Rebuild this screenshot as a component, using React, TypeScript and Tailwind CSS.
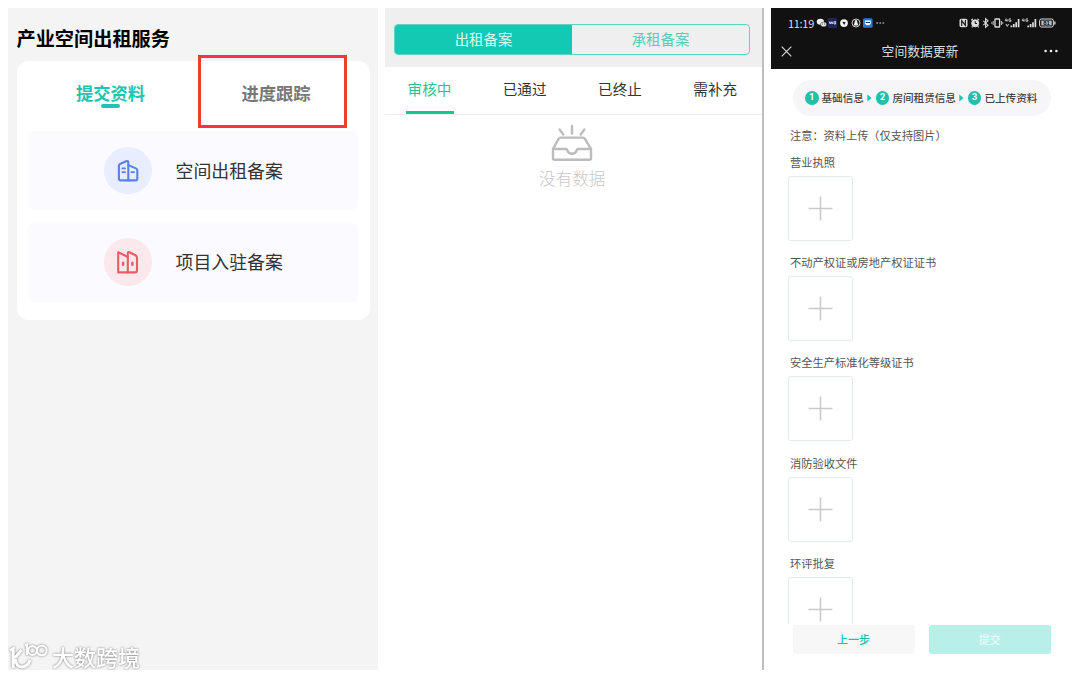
import type { ReactNode } from 'react';

const RECORD_TABS = ['审核中', '已通过', '已终止', '需补充'];

const STEPS = ['基础信息', '房间租赁信息', '已上传资料'];

const UPLOADS = [
  '营业执照',
  '不动产权证或房地产权证证书',
  '安全生产标准化等级证书',
  '消防验收文件',
  '环评批复',
];

function BlueBuilding() {
  return (
    <svg width="22" height="22" viewBox="0 0 22 22" fill="none" stroke="#5b7fee" strokeWidth="2.1" strokeLinejoin="round" strokeLinecap="round">
      <path d="M11.3 20.4H3.8Q1.9 20.4 1.9 18.5V5.8Q1.9 4.6 3 4L9.1 1.3Q11.3 .6 11.3 2.5Z" />
      <path d="M11.3 5.1L18.9 8.4Q20.3 9 20.3 10.5V18.5Q20.3 20.4 18.5 20.4H11.3" />
      <path d="M5.4 8.4H8M5.4 12.2H8M14.4 12.2H17" strokeWidth="1.8" />
    </svg>
  );
}

function RedBuilding() {
  return (
    <svg width="22" height="24" viewBox="0 0 22 24" fill="none" stroke="#ec5b68" strokeWidth="2.1" strokeLinejoin="round" strokeLinecap="round">
      <path d="M10.8 22.4H1.2V2.2L10.8 7" />
      <path d="M10.8 22.4V3.2Q10.8 1.6 12.4 2.2L18.4 5.3Q20 6.1 20 7.8V20.6Q20 22.4 18.2 22.4Z" />
      <path d="M6.1 12.7V14.8M15.4 12.7V14.8" strokeWidth="2.5" />
    </svg>
  );
}

function EmptyInbox() {
  return (
    <svg width="42" height="38" viewBox="0 0 42 38" fill="none" stroke="#bcbcbc" strokeWidth="2.4" strokeLinejoin="round" strokeLinecap="round">
      <path d="M21 2V9.5M8.6 5.5L12.3 10.6M33.3 5.5L29.6 10.6" />
      <path d="M2 25L7.6 14.8Q8.4 13.6 9.8 13.6H31.8Q33.2 13.6 34 14.8L40 25V34Q40 35.8 38.2 35.8H3.8Q2 35.8 2 34Z" />
      <path d="M2 25H14.8Q16 25 16.3 26.5Q17.6 29.8 21 29.8Q24.4 29.8 25.7 26.5Q26 25 27.2 25H40" />
    </svg>
  );
}

// Left half of the status bar: chat, app and notification glyphs
function NotificationIcons() {
  return (
    <svg width="70" height="12" viewBox="0 0 70 12">
      <ellipse cx="4.4" cy="4.7" rx="3.7" ry="3" fill="#eee" />
      <ellipse cx="7.6" cy="7.4" rx="3" ry="2.4" fill="#eee" stroke="#111" strokeWidth=".5" />
      <circle cx="6.6" cy="7" r=".5" fill="#111" />
      <circle cx="8.6" cy="7" r=".5" fill="#111" />
      <rect x="11.8" y="1" width="9.4" height="10" rx="1" fill="#20245c" />
      <path d="M13.2 4.5L14.2 7L15.2 4.7L16.2 7L17 4.6M18 4.7H19.6V7H18Z" stroke="#ddd" strokeWidth=".9" fill="none" />
      <circle cx="28" cy="6.1" r="3.9" fill="#f2f2f2" />
      <path d="M26.4 4.8L29.6 5.2L28.1 8Z" fill="#111" />
      <circle cx="40" cy="6" r="4" fill="none" stroke="#ddd" strokeWidth=".9" />
      <path d="M40 2.7Q41.6 3 41.4 5.6L42.4 8.5H37.6L38.6 5.6Q38.4 3 40 2.7Z" fill="#eee" />
      <rect x="47" y="1.2" width="9.6" height="9.6" rx="1.6" fill="#2879d4" />
      <path d="M48.9 3.4H54.7V6.8Q51.8 9.8 48.9 6.8Z" fill="#fff" />
      <path d="M49.6 5H54V6H49.6Z" fill="#17365c" />
      <path d="M60.3 6H62M63.4 6H65.1M66.5 6H68.2" stroke="#ddd" strokeWidth="1.2" />
    </svg>
  );
}

function SystemIcons() {
  return (
    <svg width="98" height="12" viewBox="0 0 98 12" fill="none" stroke="#ddd">
      <rect x=".5" y="1.8" width="8" height="8.4" rx="1.8" fill="#ddd" stroke="none" />
      <path d="M2.7 9V3.6L6.4 8.4V3" stroke="#111" strokeWidth="1.1" />
      <circle cx="16.2" cy="6.3" r="3.5" fill="#ddd" />
      <path d="M12.3 3.3L14 1.9M20.1 3.3L18.4 1.9M13.6 9.4L12.8 10.3M18.8 9.4L19.6 10.3" strokeWidth="1.2" />
      <path d="M16.2 4.2V6.5H18" stroke="#111" />
      <path d="M24.3 3.8L29 8.2L26.6 10.3V1.7L29 3.8L24.3 8.2" strokeWidth="1.1" />
      <rect x="36" y="2" width="4.6" height="8" rx=".6" strokeWidth="1.3" />
      <path d="M34.2 4V8M42.4 4V8M32.8 5.2V6.8M43.8 5.2V6.8" strokeWidth=".9" />
      <path d="M47.2 1.5L46.2 3.6H48.4M48 2V4.7M52 1.9H50V4.3H52V3.3H51" strokeWidth=".8" />
      <path d="M47 7L48.3 9.4L49.6 7" strokeWidth=".9" />
      <path d="M52.4 8.5V10.3M54.8 7V10.3M57.2 5.2V10.3M59.6 2V10.3" strokeWidth="1.7" />
      <path d="M64.2 1.5L63.2 3.6H65.4M65 2V4.7M69 1.9H67V4.3H69V3.3H68" strokeWidth=".8" />
      <path d="M69.2 8.5V10.3M71.6 7V10.3M74 5.2V10.3M76.4 2V10.3" strokeWidth="1.7" />
      <rect x="80.6" y="2" width="13.8" height="8" rx="1.8" strokeWidth="1" />
      <rect x="82.3" y="3.6" width="10.4" height="4.8" fill="#bbb" stroke="none" />
      <path d="M95.9 4.6V7.4" strokeWidth="1.3" />
      <text x="84.2" y="8.2" fontSize="6" fontWeight="700" fill="#111" stroke="none" fontFamily="Liberation Sans, sans-serif">81</text>
    </svg>
  );
}

function Watermark() {
  return (
    <div className="absolute left-2 top-[641px] flex items-center gap-[4px] drop-shadow-[0_0_1px_#777]">
      <svg width="40" height="30" viewBox="0 0 40 30" fill="none" stroke="#fff" strokeWidth="2.9">
        <path d="M2 9.5L5.2 7.5V27M13.5 9L6.8 17M7.4 18Q8 26 14 26Q20 25.5 22 19" />
        <path d="M17 4.5L19 3.5V14" strokeWidth="2.1" />
        <circle cx="24.5" cy="9.5" r="4.4" strokeWidth="2.1" />
        <circle cx="33.8" cy="9.5" r="4.8" strokeWidth="2.1" />
      </svg>
      <span className="text-[22px] leading-[26px] font-medium text-white">大数跨境</span>
    </div>
  );
}

interface ServiceRowProps {
  label: string;
  icon: ReactNode;
  tint: string;
}

function ServiceRow({ label, icon, tint }: ServiceRowProps) {
  return (
    <div className="flex h-[79px] items-center rounded-md bg-[#fafaff] pl-[76px]">
      <div className={`flex size-[47.5px] items-center justify-center rounded-full ${tint}`}>{icon}</div>
      <span className="pb-[2px] pl-[24px] text-[17.9px] leading-6 text-[#333]">{label}</span>
    </div>
  );
}

function ServicePanel() {
  return (
    <section className="relative h-[662px] w-[370px] shrink-0 bg-[#f4f4f4] px-[8.5px] pt-[17px]">
      <h1 className="h-[36px] text-[19.2px] leading-[26px] font-bold text-black">产业空间出租服务</h1>
      <div className="h-[259px] rounded-xl bg-white px-[11.5px]">
        <div className="flex h-[70px] pt-[19px] text-[17.3px] leading-[26px] font-bold">
          <div className="flex w-1/2 flex-col items-center">
            <span className="text-[#22c3b0]">提交资料</span>
            <i className="-mt-[2px] h-[4px] w-[19px] rounded-full bg-[#22c3b0]" />
          </div>
          <div className="flex w-1/2 justify-center pl-px text-[#777]">进度跟踪</div>
        </div>
        <div className="flex flex-col gap-[12.5px]">
          <ServiceRow label="空间出租备案" icon={<BlueBuilding />} tint="bg-[#e8edff]" />
          <ServiceRow label="项目入驻备案" icon={<RedBuilding />} tint="bg-[#fbe8ed]" />
        </div>
      </div>
      <div className="absolute top-[47px] left-[190px] h-[73px] w-[149px] border-3 border-[#f03a34]" />
    </section>
  );
}

function RecordPanel() {
  return (
    <section className="ml-[7px] h-[662px] w-[378.5px] shrink-0 overflow-hidden border-r-2 border-[#bebebe] bg-white">
      <div className="h-[59px] bg-[#efefef] px-[9px] pt-[16px]">
        <div className="flex h-[31px] w-[356px] overflow-hidden rounded-[4px] border border-[#5dd4c2] text-[14.4px] text-[#4fcfbc]">
          <div className="flex w-1/2 items-center justify-center bg-[#14c9b4] pb-[2px] text-[#d6fff6]">出租备案</div>
          <div className="flex w-1/2 items-center justify-center pb-[2px]">承租备案</div>
        </div>
      </div>
      <nav className="flex h-[48px] w-[381px] border-b border-[#eee] pr-[3px]">
        {RECORD_TABS.map((tab, i) => (
          <div
            key={tab}
            className={
              i === 0
                ? 'flex w-[89px] flex-col items-center text-[#1fc58f]'
                : 'flex w-[95.3px] justify-center pl-[6px] text-[#333]'
            }
          >
            <span className="h-[44.5px] pt-[12px] text-[14.6px] leading-[20px]">{tab}</span>
            {i === 0 && <i className="h-[3px] w-[48px] shrink-0 bg-[#14c58e]" />}
          </div>
        ))}
      </nav>
      <div className="flex flex-col items-center pt-[9px] pr-[2px]">
        <EmptyInbox />
        <p className="pt-[4px] text-[16.6px] leading-6 font-light text-[#c8c8c8]">没有数据</p>
      </div>
    </section>
  );
}

function UploadPanel() {
  return (
    <section className="ml-[7.5px] h-[662px] w-[301px] shrink-0 overflow-hidden bg-white">
      <header className="h-[61px] bg-[#111] text-[#ddd]">
        <div className="flex h-[30px] items-center pl-[17px]">
          <span className="w-[28px] font-['Noto_Sans_CJK_SC',sans-serif] text-[11px] leading-4 tracking-[-0.3px] whitespace-nowrap">11:19</span>
          <NotificationIcons />
          <span className="w-[73px]" />
          <SystemIcons />
        </div>
        <div className="flex h-[26px] items-center justify-between pr-[14px] pl-[10px]">
          <svg width="11" height="11" viewBox="0 0 11 11" stroke="#ddd" strokeWidth="1.1">
            <path d="M.7 .7L10.3 10.3M10.3 .7L.7 10.3" />
          </svg>
          <span className="pl-[4px] text-[12.8px] leading-4">空间数据更新</span>
          <svg width="14" height="4" viewBox="0 0 14 4" fill="#eee">
            <circle cx="1.6" cy="2" r="1.3" />
            <circle cx="7" cy="2" r="1.3" />
            <circle cx="12.4" cy="2" r="1.3" />
          </svg>
        </div>
      </header>

      <div className="h-[555px] overflow-hidden pt-[11px] pl-[17px]">
        <div className="ml-[4.5px] flex h-[36px] w-[258px] items-center rounded-full bg-[#f6f6f9] pl-[12.5px]">
          {STEPS.map((step, i) => (
            <div key={step} className="flex items-center">
              {i > 0 && (
                <svg className="mr-[4px] ml-[3px]" width="5" height="8" viewBox="0 0 5 8" fill="#22c3b0">
                  <path d="M.3 .5L4.6 4L.3 7.5Z" />
                </svg>
              )}
              <span className="flex size-[13.5px] items-center justify-center rounded-full bg-[#22bfaa] font-[Roboto,sans-serif] text-[9px] font-bold text-white">
                {i + 1}
              </span>
              <span className="pl-[3px] text-[10.6px] font-medium whitespace-nowrap text-[#444]">{step}</span>
            </div>
          ))}
        </div>
        <p className="mt-[11px] ml-[2px] text-[11.2px] leading-4 text-[#555]">注意：资料上传（仅支持图片）</p>
        <div className="pt-[11px]">
          {UPLOADS.map((name) => (
            <div key={name} className="h-[100.2px]">
              <p className="pl-[2px] text-[11.25px] leading-4 text-[#555]">{name}</p>
              <div className="mt-[6px] flex size-[65px] items-center justify-center rounded-[3px] border border-[#e2eaea]">
                <svg width="25" height="25" viewBox="0 0 25 25" stroke="#c9c9c9" strokeWidth="1.5">
                  <path d="M12.5 .5V24.5M.5 12.5H24.5" />
                </svg>
              </div>
            </div>
          ))}
        </div>
      </div>

      <footer className="flex gap-[14px] bg-white pt-[1px] pl-[21.5px] text-[11px] leading-none">
        <button className="h-[29px] w-[122px] rounded-[3px] bg-[#f7f7f7] pb-px font-medium text-[#22bfaa]">上一步</button>
        <button className="h-[29px] w-[122.5px] rounded-[3px] bg-[#b8efe9] pb-px text-[#ecfffc]">提交</button>
      </footer>
    </section>
  );
}

export default function App() {
  return (
    <main className="relative flex h-[678px] w-[1080px] overflow-hidden bg-white p-2 font-['Noto_Sans_CJK_SC',sans-serif]">
      <ServicePanel />
      <RecordPanel />
      <UploadPanel />
      <Watermark />
    </main>
  );
}
